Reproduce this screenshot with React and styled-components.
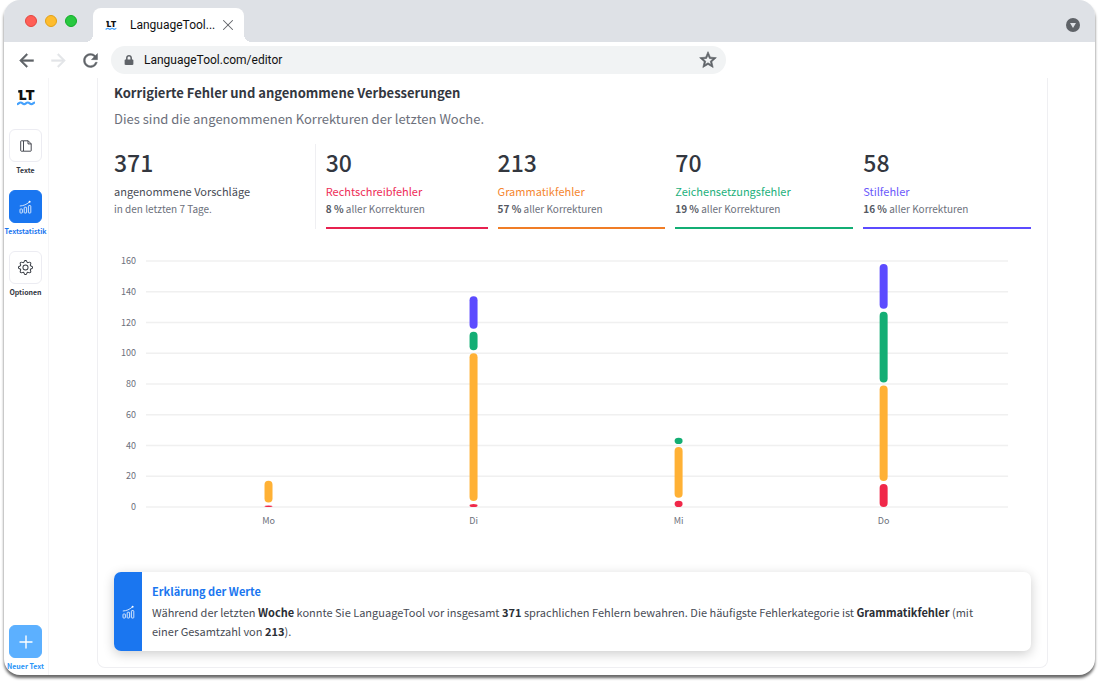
import React from "react";
import styled, { createGlobalStyle } from "styled-components";
import {
  MdArrowBack,
  MdArrowForward,
  MdRefresh,
  MdStarOutline,
} from "react-icons/md";
import { FaLock } from "react-icons/fa";
import { BsGear } from "react-icons/bs";
import { X } from "lucide-react";

const GlobalStyle = createGlobalStyle`
  * {
    box-sizing: border-box;
  }

  body {
    margin: 0;
    background: #fff;
    font-family: "Noto Sans CJK SC", "Noto Sans", sans-serif;
    color: #33373f;
  }

  h2, h3, p {
    margin: 0;
  }

  button {
    border: none;
    padding: 0;
    background: none;
    color: inherit;
    cursor: pointer;
  }

  svg {
    display: block;
  }
`

const Page = styled.div`
  display: flex;
  min-height: 100vh;
  padding: 0 4px 9px;
`

const Window = styled.div`
  flex: 1;
  min-width: 0;
  display: flex;
  flex-direction: column;
  border-radius: 16px;
  overflow: hidden;
  background: #fff;
  box-shadow: 0 3px 3px rgba(0, 0, 0, 0.6);
`

const TabBar = styled.div`
  display: flex;
  align-items: flex-end;
  height: 42px;
  background: #dee1e6;
`

const Lights = styled.div`
  display: flex;
  gap: 8px;
  align-self: center;
  margin: 0 16px 0 21px;
`

const Light = styled.span`
  width: 12px;
  height: 12px;
  border-radius: 50%;
  border: 1px solid ${(props) => props.$border};
  background: ${(props) => props.$color};
`

const Tab = styled.div`
  position: relative;
  display: flex;
  align-items: center;
  height: 34px;
  padding: 0 7px 0 12px;
  border-radius: 8px 8px 0 0;
  background: #fff;
  font: 12px/16px Roboto, sans-serif;
  color: #111;

  &::before, &::after {
    content: "";
    position: absolute;
    bottom: 0;
    width: 8px;
    height: 8px;
  }

  &::before {
    left: -8px;
    background: radial-gradient(circle at 0 0, transparent 8px, #fff 8px);
  }

  &::after {
    right: -8px;
    background: radial-gradient(circle at 100% 0, transparent 8px, #fff 8px);
  }
`

const TabTitle = styled.span`
  margin: 0 4px 0 13px;
`

const TabMenu = styled.button`
  display: grid;
  place-items: center;
  align-self: center;
  width: 14px;
  height: 14px;
  margin: 8px 15px 0 auto;
  border-radius: 50%;
  background: #5f6368;
`

const Toolbar = styled.div`
  display: flex;
  align-items: center;
  height: 36px;
  padding-left: 11px;
  color: #5f6368;
`

const ToolButton = styled.button`
  display: grid;
  place-items: center;
  width: 22px;
  margin-right: 10px;
  color: ${(props) => (props.disabled ? "#e3e5e8" : "#5f6368")};

  path:not([fill="none"]) {
    stroke: currentColor;
    stroke-width: 0.5;
  }

  path[fill="none"] {
    stroke: none;
  }
`

const AddressBar = styled.label`
  display: flex;
  align-items: center;
  gap: 10px;
  width: 615px;
  height: 28px;
  padding: 0 8px 0 13px;
  border-radius: 14px;
  background: #f1f3f4;

  input {
    flex: 1;
    min-width: 0;
    border: none;
    outline: none;
    padding: 0;
    background: none;
    font: 12px/16px Roboto, sans-serif;
    color: #111;
  }

  button path:not([fill="none"]) {
    stroke: currentColor;
    stroke-width: 0.8;
  }
`

const Content = styled.div`
  flex: 1;
  display: flex;
`

const Sidebar = styled.nav`
  display: flex;
  flex-direction: column;
  align-items: center;
  width: 45px;
  padding: 9px 1px 4px 0;
  border-right: 1px solid #f5f5f7;
`

const SidebarLinks = styled.div`
  display: flex;
  flex-direction: column;
  gap: 15px;
  margin-top: 22px;
`

const SidebarItem = styled.a`
  display: flex;
  flex-direction: column;
  align-items: center;
  gap: 3px;
  width: 43px;
  font-size: 7px;
  line-height: 10px;
  font-weight: bold;
  text-decoration: none;
  white-space: nowrap;
  color: ${(props) => props.$color || "#33373f"};

  &:last-child {
    margin-top: auto;
  }
`

const SidebarIcon = styled.span`
  display: grid;
  place-items: center;
  width: 33px;
  height: 33px;
  border-radius: 6px;
  border: 1px solid ${(props) => props.$fill || "#ececf2"};
  background: ${(props) => props.$fill || "#fff"};
  color: ${(props) => (props.$fill ? "#fff" : "#33373f")};
`

const Main = styled.main`
  flex: 1;
  min-width: 0;
  padding: 0 47px 7px 48px;
`

const Panel = styled.section`
  padding: 5px 16px 16px;
  border: 1px solid #efeff2;
  border-top: none;
  border-radius: 0 0 8px 8px;
`

const Title = styled.h2`
  font-size: 13px;
  line-height: 20px;
`

const Subtitle = styled.p`
  margin-top: 5px;
  font-size: 13px;
  line-height: 22px;
  color: #6c707b;
`

const Stats = styled.div`
  display: flex;
  gap: 10px;
  margin-top: 14px;
`

const Stat = styled.div`
  flex: 1 1 auto;
  padding: 4px 0 10px;
  border-bottom: 2px solid ${(props) => props.$line || "transparent"};
`

const TotalStat = styled(Stat)`
  min-width: 22%;
  border-bottom: none;
  border-right: 1px solid #efeff2;
`

const StatNumber = styled.p`
  font-size: 23px;
  line-height: 28px;
  font-weight: 500;
`

const StatLabel = styled.p`
  margin-top: 6px;
  font-size: 11px;
  line-height: 18px;
  color: ${(props) => props.$color || "#484c55"};
`

const StatShare = styled.p`
  margin-top: 1px;
  font-size: 10px;
  line-height: 16px;
  color: #6c707b;

  b {
    color: #545862;
  }
`

const Chart = styled.svg`
  width: 100%;
  height: 280px;
  margin-top: 21px;

  text {
    font-size: 9px;
    fill: #6c707b;
  }

  line {
    stroke: #f0f0f0;
    stroke-width: 1.5;
  }
`

const Explanation = styled.div`
  display: flex;
  margin-top: 42px;
  border-radius: 7px;
  overflow: hidden;
  background: #fff;
  box-shadow: 0 3px 12px rgba(0, 0, 0, 0.2);
`

const ExplanationIcon = styled.div`
  display: grid;
  place-items: center;
  flex: none;
  width: 28px;
  background: #1a76f0;
  color: #fff;
`

const ExplanationText = styled.div`
  padding: 10px 36px 10px 10px;
  font-size: 11px;
  line-height: 19px;
  color: #484c55;

  h3 {
    margin-bottom: 3px;
    font-size: 11px;
    line-height: 18px;
    color: #1a76f0;
  }

  b {
    color: #2b2e35;
  }
`

const Logo = ({ size }) => (
  <svg width={size} height={size} viewBox="0 0 20 20" role="img" aria-label="LanguageTool">
    <text x="3" y="13" fontFamily="Inter" fontWeight="900" fontSize="13.5" fill="#111">LT</text>
    <rect x="2.2" y="3.2" width="3" height="2.4" fill="#111" />
    <path
      d="M1 17.2c1.6 0 1.8-1.7 3.6-1.7s2 1.7 3.6 1.7 1.8-1.7 3.6-1.7 2 1.7 3.6 1.7 1.9-1.7 3.6-1.7"
      fill="none"
      stroke="#45a1fc"
      strokeWidth="2.2"
    />
  </svg>
)

const StatsIcon = () => (
  <svg width="13" height="14" viewBox="0 0 13 14" fill="none" stroke="currentColor" strokeWidth="0.8">
    <rect x="1" y="9" width="2.4" height="4" rx="0.6" />
    <rect x="5.2" y="7.2" width="2.4" height="5.8" rx="0.6" />
    <rect x="9.4" y="5.6" width="2.4" height="7.4" rx="0.6" />
    <path d="M0.8 6C4.5 5.8 7.4 4.6 10.4 2" />
    <circle cx="10.6" cy="1.8" r="1" fill="currentColor" stroke="none" />
  </svg>
)

const TextsIcon = () => (
  <svg width="12" height="12" viewBox="0 0 12 12" fill="none" stroke="currentColor" strokeWidth="0.9">
    <path d="M3.5 0.8H1.3a.6.6 0 0 0-.6.6v9.2c0 .3.3.6.6.6h2.2" />
    <path d="M3.5 0.8h4.7l3 3v6.8a.6.6 0 0 1-.6.6H3.5z" />
    <path d="M8 0.8v3.1h3.2" />
  </svg>
)

const PlusIcon = () => (
  <svg width="14" height="14" viewBox="0 0 14 14" stroke="currentColor" strokeWidth="1.4" strokeLinecap="round">
    <path d="M7 1v12M1 7h12" />
  </svg>
)

const stats = [
  { name: "Rechtschreibfehler", amount: 30, share: 8, color: "#ee2c57", line: "#e7214f" },
  { name: "Grammatikfehler", amount: 213, share: 57, color: "#f5862f", line: "#f07d26" },
  { name: "Zeichensetzungsfehler", amount: 70, share: 19, color: "#1bb07b", line: "#13ae74" },
  { name: "Stilfehler", amount: 58, share: 16, color: "#6b59fb", line: "#5c4bff" },
]

const barColors = ["#f02849", "#ffb135", "#13ae74", "#5c4bff"]

const days = [
  { day: "Mo", values: [1, 16, 0, 0] },
  { day: "Di", values: [2, 98, 14, 23] },
  { day: "Mi", values: [4, 35, 6, 0] },
  { day: "Do", values: [15, 64, 48, 31] },
]

const ticks = [0, 20, 40, 60, 80, 100, 120, 140, 160]
const baseline = 257
const scale = 246 / 160

const Bar = ({ values }) => {
  let total = 0

  return values.map((value, index) => {
    const gap = index === 0 ? 0 : 3
    total += value
    if (value === 0) return null

    return (
      <rect
        key={index}
        x="-4"
        y={baseline - total * scale}
        width="8"
        height={value * scale - gap}
        rx="4"
        ry="4"
        fill={barColors[index]}
      />
    )
  })
}

const ErrorChart = () => (
  <Chart role="img" aria-label="Fehler pro Tag">
    {ticks.map((tick) => (
      <g key={tick}>
        <text x="22" y={baseline - tick * scale + 3} textAnchor="end">{tick}</text>
        <line x1="32" x2="97.5%" y1={baseline - tick * scale} y2={baseline - tick * scale} />
      </g>
    ))}
    {days.map(({ day, values }, index) => (
      <svg key={day} x={`${16.85 + index * 22.36}%`} overflow="visible">
        <Bar values={values} />
        <text y="274" textAnchor="middle">{day}</text>
      </svg>
    ))}
  </Chart>
)

export default function App() {
  return (
    <Page>
      <GlobalStyle />
      <Window>
        <TabBar>
          <Lights>
            <Light $color="#ff5f57" $border="#e2463f" />
            <Light $color="#febc2e" $border="#e1a116" />
            <Light $color="#28c840" $border="#12ac28" />
          </Lights>
          <Tab>
            <Logo size={12} />
            <TabTitle>LanguageTool...</TabTitle>
            <button aria-label="Tab schließen">
              <X size={18} strokeWidth={1.4} color="#5f6368" />
            </button>
          </Tab>
          <TabMenu aria-label="Tabs suchen">
            <svg width="6" height="5" viewBox="0 0 6 5" fill="#dee1e6">
              <path d="M0 0h6L3 5z" />
            </svg>
          </TabMenu>
        </TabBar>

        <Toolbar>
          <ToolButton aria-label="Zurück"><MdArrowBack size={21} /></ToolButton>
          <ToolButton aria-label="Vorwärts" disabled><MdArrowForward size={21} /></ToolButton>
          <ToolButton aria-label="Neu laden"><MdRefresh size={21} /></ToolButton>
          <AddressBar>
            <FaLock size={10} />
            <input aria-label="Adresse" defaultValue="LanguageTool.com/editor" />
            <button aria-label="Lesezeichen"><MdStarOutline size={20} /></button>
          </AddressBar>
        </Toolbar>

        <Content>
          <Sidebar>
            <Logo size={20} />
            <SidebarLinks>
              <SidebarItem href="#texte">
                <SidebarIcon><TextsIcon /></SidebarIcon>
                Texte
              </SidebarItem>
              <SidebarItem href="#textstatistik" $color="#1a76f0">
                <SidebarIcon $fill="#1a76f0"><StatsIcon /></SidebarIcon>
                Textstatistik
              </SidebarItem>
              <SidebarItem href="#optionen">
                <SidebarIcon><BsGear size={15} /></SidebarIcon>
                Optionen
              </SidebarItem>
            </SidebarLinks>
            <SidebarItem href="#neu" $color="#2b95f8">
              <SidebarIcon $fill="#5cb0ff"><PlusIcon /></SidebarIcon>
              Neuer Text
            </SidebarItem>
          </Sidebar>

          <Main>
            <Panel>
              <Title>Korrigierte Fehler und angenommene Verbesserungen</Title>
              <Subtitle>Dies sind die angenommenen Korrekturen der letzten Woche.</Subtitle>

              <Stats>
                <TotalStat>
                  <StatNumber>371</StatNumber>
                  <StatLabel>angenommene Vorschläge</StatLabel>
                  <StatShare>in den letzten 7 Tage.</StatShare>
                </TotalStat>
                {stats.map((stat) => (
                  <Stat key={stat.name} $line={stat.line}>
                    <StatNumber>{stat.amount}</StatNumber>
                    <StatLabel $color={stat.color}>{stat.name}</StatLabel>
                    <StatShare><b>{stat.share} %</b> aller Korrekturen</StatShare>
                  </Stat>
                ))}
              </Stats>

              <ErrorChart />

              <Explanation>
                <ExplanationIcon><StatsIcon /></ExplanationIcon>
                <ExplanationText>
                  <h3>Erklärung der Werte</h3>
                  <p>
                    Während der letzten <b>Woche</b> konnte Sie LanguageTool vor insgesamt <b>371</b> sprachlichen
                    Fehlern bewahren. Die häufigste Fehlerkategorie ist <b>Grammatikfehler</b> (mit einer Gesamtzahl
                    von <b>213</b>).
                  </p>
                </ExplanationText>
              </Explanation>
            </Panel>
          </Main>
        </Content>
      </Window>
    </Page>
  );
}
